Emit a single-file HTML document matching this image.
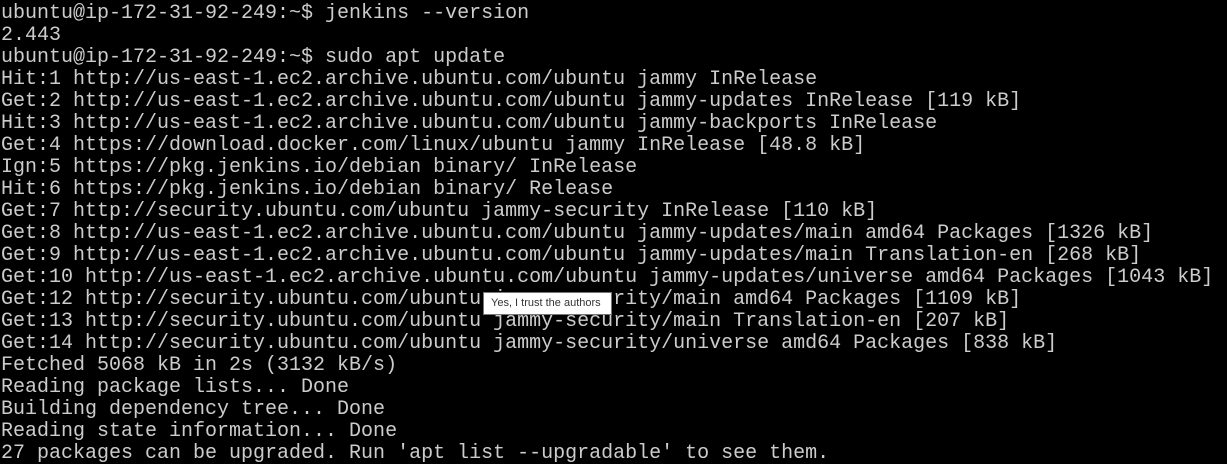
<!DOCTYPE html>
<html><head><style>
html,body{margin:0;padding:0;background:#000;width:1227px;height:464px;overflow:hidden}
pre{margin:0;padding:3px 0 0 1px;font-family:"Liberation Mono",monospace;font-size:20px;line-height:22px;color:#cccccc;letter-spacing:0}
.tip{position:absolute;left:483px;top:292px;width:129px;height:23px;background:#fff;border:1px solid #767676;box-sizing:border-box;font-family:"Liberation Sans",sans-serif;font-size:11px;color:#333;line-height:21px;padding-left:7px;white-space:nowrap}
</style></head><body>
<pre>ubuntu@ip-172-31-92-249:~$ jenkins --version
2.443
ubuntu@ip-172-31-92-249:~$ sudo apt update
Hit:1 http://us-east-1.ec2.archive.ubuntu.com/ubuntu jammy InRelease
Get:2 http://us-east-1.ec2.archive.ubuntu.com/ubuntu jammy-updates InRelease [119 kB]
Hit:3 http://us-east-1.ec2.archive.ubuntu.com/ubuntu jammy-backports InRelease
Get:4 https://download.docker.com/linux/ubuntu jammy InRelease [48.8 kB]
Ign:5 https://pkg.jenkins.io/debian binary/ InRelease
Hit:6 https://pkg.jenkins.io/debian binary/ Release
Get:7 http://security.ubuntu.com/ubuntu jammy-security InRelease [110 kB]
Get:8 http://us-east-1.ec2.archive.ubuntu.com/ubuntu jammy-updates/main amd64 Packages [1326 kB]
Get:9 http://us-east-1.ec2.archive.ubuntu.com/ubuntu jammy-updates/main Translation-en [268 kB]
Get:10 http://us-east-1.ec2.archive.ubuntu.com/ubuntu jammy-updates/universe amd64 Packages [1043 kB]
Get:12 http://security.ubuntu.com/ubuntu jammy-security/main amd64 Packages [1109 kB]
Get:13 http://security.ubuntu.com/ubuntu jammy-security/main Translation-en [207 kB]
Get:14 http://security.ubuntu.com/ubuntu jammy-security/universe amd64 Packages [838 kB]
Fetched 5068 kB in 2s (3132 kB/s)
Reading package lists... Done
Building dependency tree... Done
Reading state information... Done
27 packages can be upgraded. Run 'apt list --upgradable' to see them.</pre>
<div class="tip">Yes, I trust the authors</div>
</body></html>
